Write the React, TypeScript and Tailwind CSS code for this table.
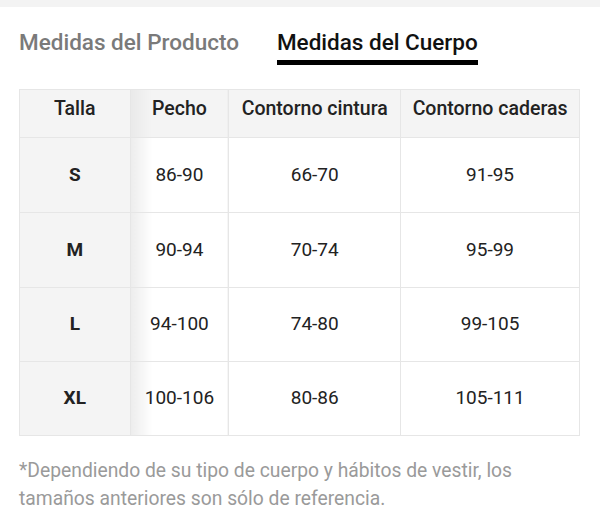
const rows = [
  { size: "S", chest: "86-90", waist: "66-70", hips: "91-95", h: "h-[75px]" },
  { size: "M", chest: "90-94", waist: "70-74", hips: "95-99", h: "h-[75px]" },
  { size: "L", chest: "94-100", waist: "74-80", hips: "99-105", h: "h-[74px]" },
  { size: "XL", chest: "100-106", waist: "80-86", hips: "105-111", h: "h-[74px]" },
]

const th = "border border-[#e6e6e6] font-medium text-[19.5px] whitespace-nowrap pb-[10px]"

export default function App() {
  return (
    <div className="w-[600px] h-[520px] bg-white font-['Roboto',sans-serif] overflow-hidden">
      <div className="h-[7px] bg-[#f3f3f3]" />
      <div className="flex items-end pl-[19px] pt-[20px] gap-[38px]">
        <div className="text-[22.5px] font-medium text-[#7a7a7a] leading-[30px] pb-[8px]">Medidas del Producto</div>
        <div className="flex flex-col">
          <div className="text-[22.5px] font-medium text-[#111] leading-[30px] pb-[3px]">Medidas del Cuerpo</div>
          <div className="h-[5px] bg-black" />
        </div>
      </div>

      <table className="ml-[19px] mt-[24px] w-[561px] border-collapse text-[19px] text-[#222] text-center">
        <colgroup>
          <col className="w-[111px]" />
          <col className="w-[99px]" />
          <col className="w-[172px]" />
          <col className="w-[179px]" />
        </colgroup>
        <thead>
          <tr className="h-[48px] bg-[#f4f4f4]">
            <th className={th}>Talla</th>
            <th className={th + " bg-[linear-gradient(90deg,#e9e9e9_0,#f4f4f4_22px)]"}>Pecho</th>
            <th className={th}>Contorno cintura</th>
            <th className={th}>Contorno caderas</th>
          </tr>
        </thead>
        <tbody>
          {rows.map((r) => (
            <tr key={r.size} className={r.h}>
              <td className="border border-[#e6e6e6] bg-[#f4f4f4] font-bold">{r.size}</td>
              <td className="border border-[#e6e6e6] bg-[linear-gradient(90deg,#ececec_0,#fff_22px)]">{r.chest}</td>
              <td className="border border-[#e6e6e6]">{r.waist}</td>
              <td className="border border-[#e6e6e6]">{r.hips}</td>
            </tr>
          ))}
        </tbody>
      </table>

      <p className="mx-[19px] mt-[21px] text-[19.3px] leading-[28px] text-[#9a9a9a]">
        *Dependiendo de su tipo de cuerpo y hábitos de vestir, los tamaños anteriores son sólo de referencia.
      </p>
    </div>
  )
}
